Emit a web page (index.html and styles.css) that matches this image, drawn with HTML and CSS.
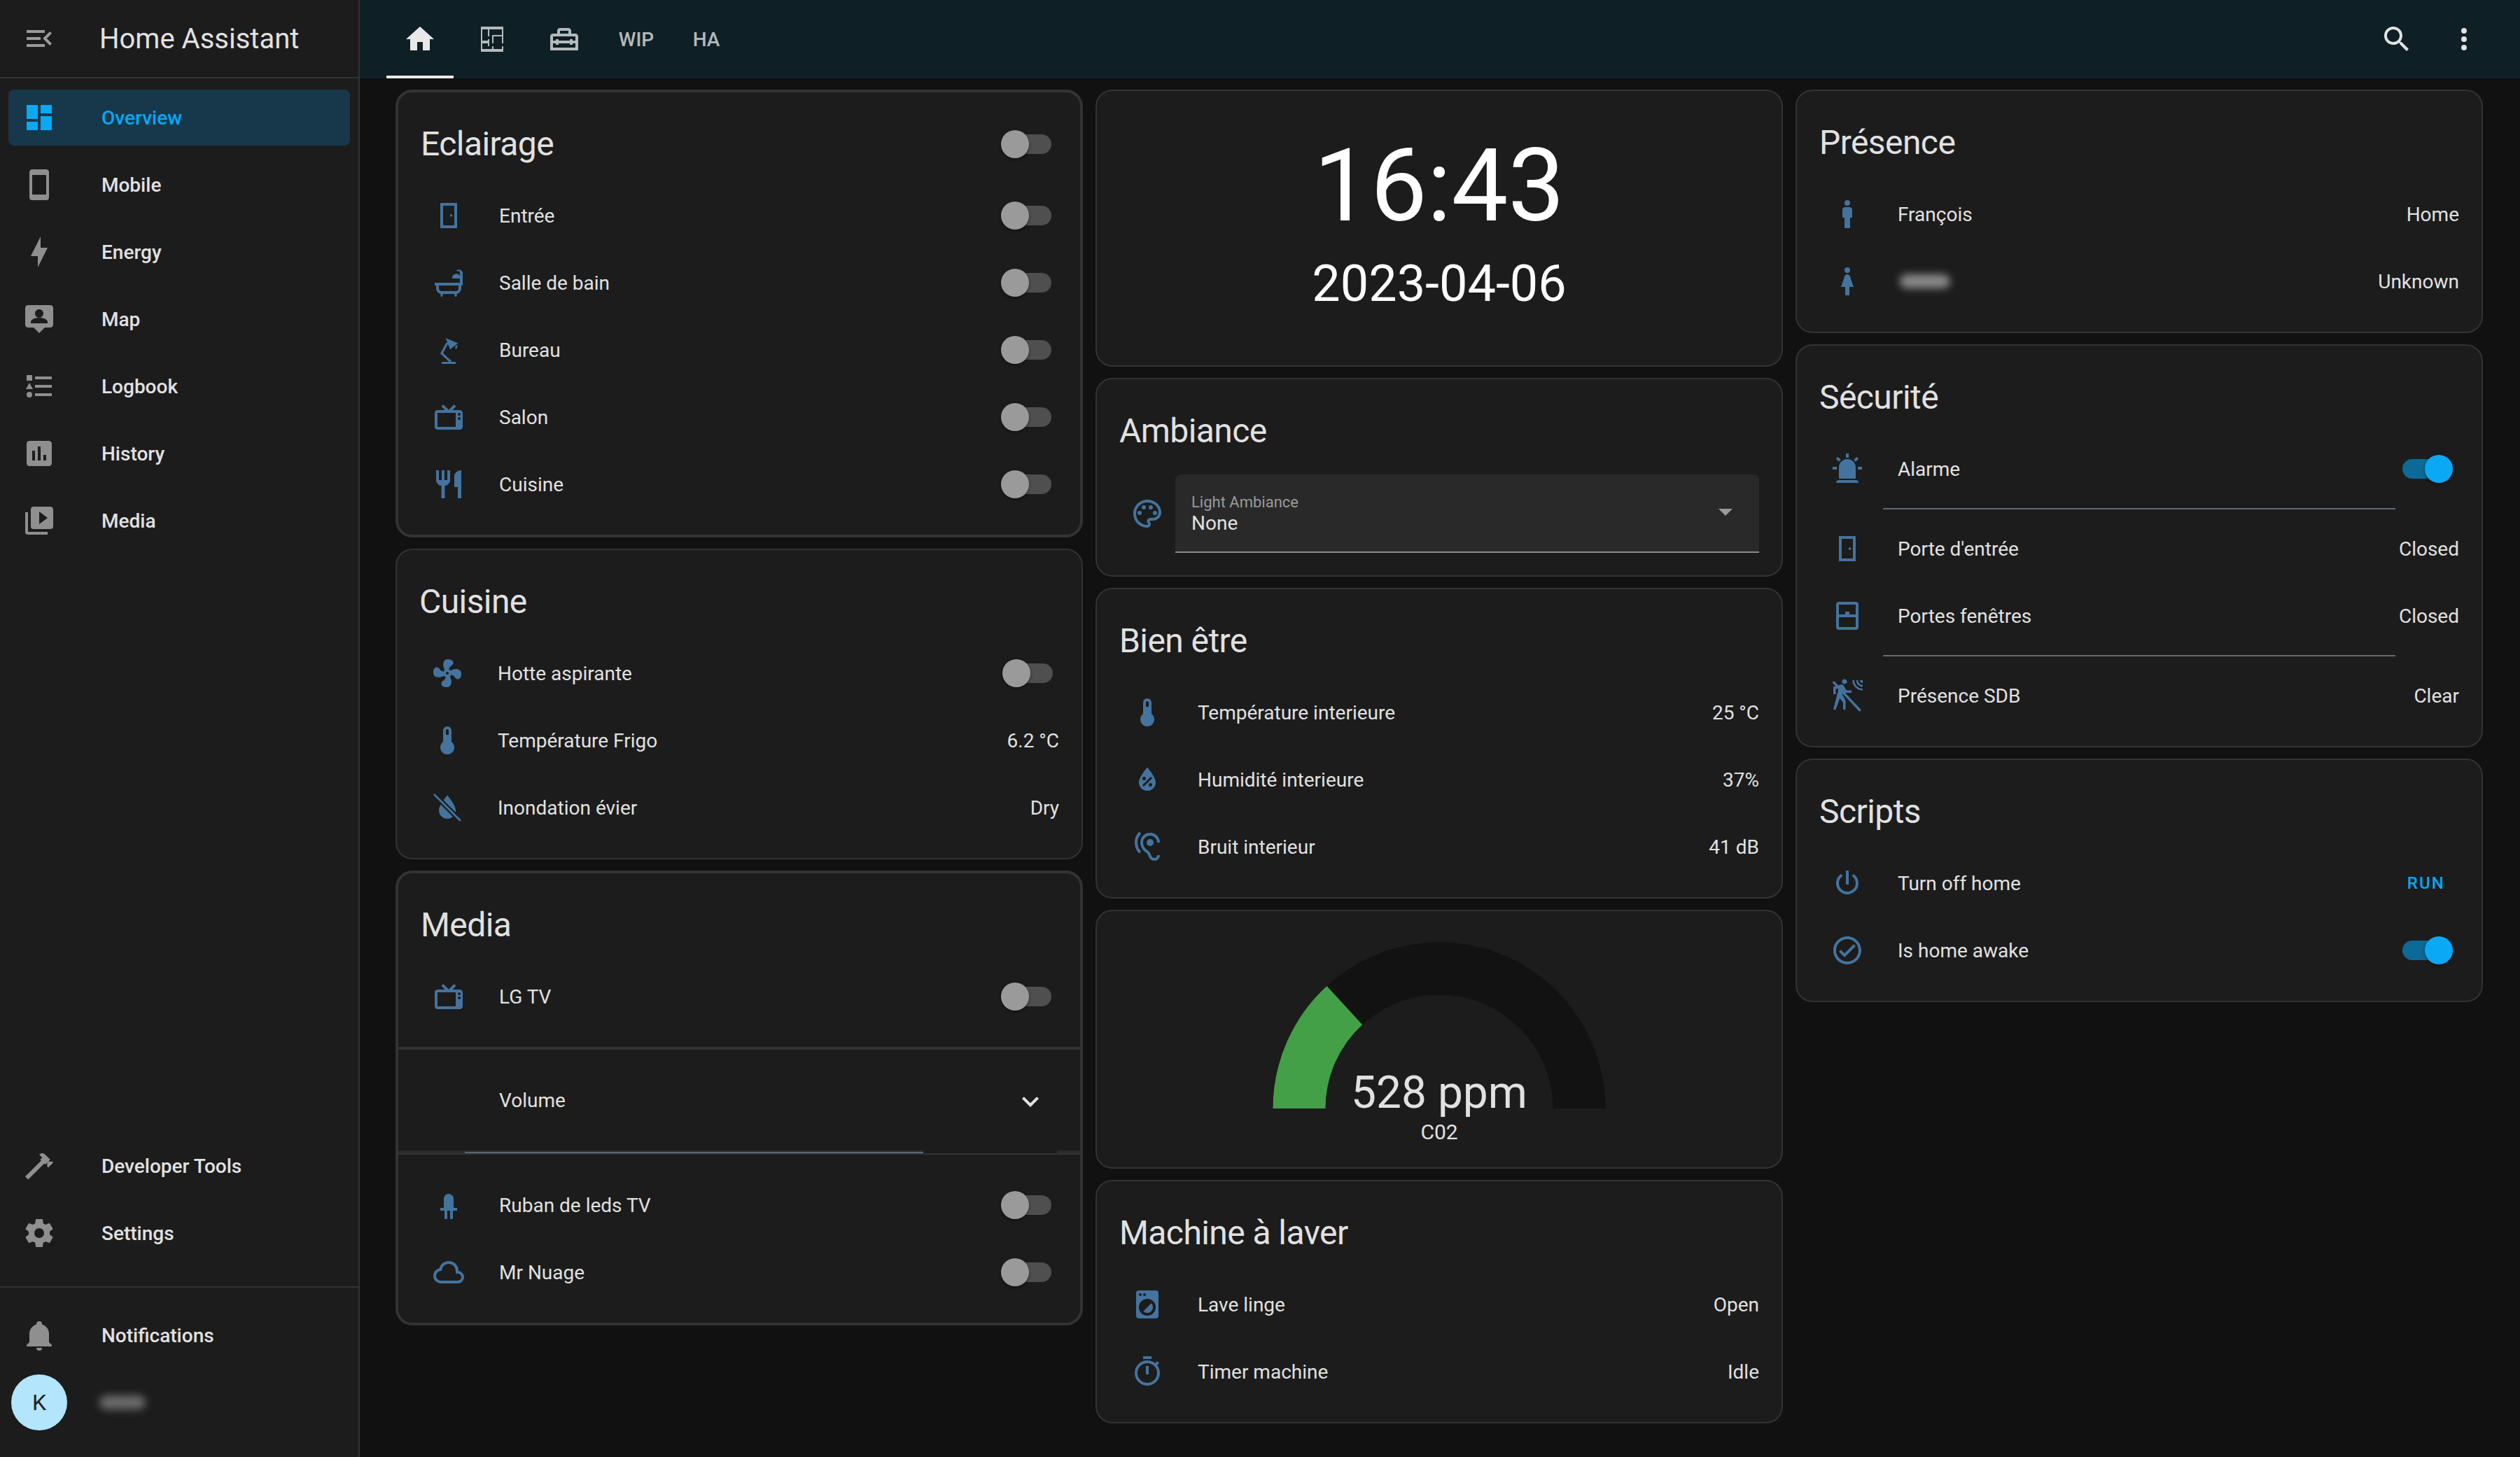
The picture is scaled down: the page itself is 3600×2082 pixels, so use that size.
FILE: index.html
```html
<!DOCTYPE html>
<html>

<head>
  <title>Home Assistant</title>
  <link rel="stylesheet" href="styles.css">
</head>

<body>
  <aside class="sidebar">
    <div class="sidebar-head">
      <svg class="mdi head-icon" viewBox="0 0 24 24"><path d="M21,15.61L19.59,17L14.58,12L19.59,7L21,8.39L17.44,12L21,15.61M3,6H16V8H3V6M3,13V11H13V13H3M3,18V16H16V18H3Z"/></svg>
      <span class="app-title">Home Assistant</span>
    </div>

    <nav class="nav">
      <a class="nav-item selected"><svg class="mdi" viewBox="0 0 24 24"><path d="M13,3V9H21V3M13,21H21V11H13M3,21H11V15H3M3,13H11V3H3V13Z"/></svg><span>Overview</span></a>
      <a class="nav-item"><svg class="mdi" viewBox="0 0 24 24"><path d="M17,19H7V5H17M17,1H7C5.89,1 5,1.89 5,3V21A2,2 0 0,0 7,23H17A2,2 0 0,0 19,21V3C19,1.89 18.1,1 17,1Z"/></svg><span>Mobile</span></a>
      <a class="nav-item"><svg class="mdi" viewBox="0 0 24 24"><path d="M11 15H6L13 1V9H18L11 23V15Z"/></svg><span>Energy</span></a>
      <a class="nav-item"><svg class="mdi" viewBox="0 0 24 24"><path d="M20,2H4C2.9,2 2,2.9 2,4V16C2,17.1 2.9,18 4,18H8L12,22L16,18H20C21.1,18 22,17.1 22,16V4C22,2.9 21.1,2 20,2M12,5C13.66,5 15,6.34 15,8S13.66,11 12,11 9,9.66 9,8 10.34,5 12,5M18,15H6V14C6,12 10,10.9 12,10.9S18,12 18,14V15Z"/></svg><span>Map</span></a>
      <a class="nav-item"><svg class="mdi" viewBox="0 0 24 24"><path d="M5,9.5L7.5,14H2.5L5,9.5M3,4H7V8H3V4M5,20A2,2 0 0,0 7,18A2,2 0 0,0 5,16A2,2 0 0,0 3,18A2,2 0 0,0 5,20M9,5V7H21V5H9M9,19H21V17H9V19M9,13H21V11H9V13Z"/></svg><span>Logbook</span></a>
      <a class="nav-item"><svg class="mdi" viewBox="0 0 24 24"><path d="M19 3H5C3.9 3 3 3.9 3 5V19C3 20.1 3.9 21 5 21H19C20.1 21 21 20.1 21 19V5C21 3.9 20.1 3 19 3M9 17H7V10H9V17M13 17H11V7H13V17M17 17H15V13H17V17Z"/></svg><span>History</span></a>
      <a class="nav-item"><svg class="mdi" viewBox="0 0 24 24"><path d="M4,6H2V20A2,2 0 0,0 4,22H18V20H4V6M20,2H8A2,2 0 0,0 6,4V16A2,2 0 0,0 8,18H20A2,2 0 0,0 22,16V4C22,2.89 21.1,2 20,2M12,14.5V5.5L18,10L12,14.5Z"/></svg><span>Media</span></a>
    </nav>

    <nav class="nav nav-bottom">
      <a class="nav-item"><svg class="mdi" viewBox="0 0 24 24"><path d="M2 19.63L13.43 8.2L12.72 7.5L14.14 6.07L12 3.89C13.2 2.7 15.09 2.7 16.27 3.89L19.87 7.5L18.45 8.91H21.29L22 9.62L18.45 13.21L17.74 12.5V9.62L16.27 11.04L15.56 10.33L4.13 21.76L2 19.63Z"/></svg><span>Developer Tools</span></a>
      <a class="nav-item"><svg class="mdi" viewBox="0 0 24 24"><path d="M12,15.5A3.5,3.5 0 0,1 8.5,12A3.5,3.5 0 0,1 12,8.5A3.5,3.5 0 0,1 15.5,12A3.5,3.5 0 0,1 12,15.5M19.43,12.97C19.47,12.65 19.5,12.33 19.5,12C19.5,11.67 19.47,11.34 19.43,11L21.54,9.37C21.73,9.22 21.78,8.95 21.66,8.73L19.66,5.27C19.54,5.05 19.27,4.96 19.05,5.05L16.56,6.05C16.04,5.66 15.5,5.32 14.87,5.07L14.5,2.42C14.46,2.18 14.25,2 14,2H10C9.75,2 9.54,2.18 9.5,2.42L9.13,5.07C8.5,5.32 7.96,5.66 7.44,6.05L4.95,5.05C4.73,4.96 4.46,5.05 4.34,5.27L2.34,8.73C2.21,8.95 2.27,9.22 2.46,9.37L4.57,11C4.53,11.34 4.5,11.67 4.5,12C4.5,12.33 4.53,12.65 4.57,12.97L2.46,14.63C2.27,14.78 2.21,15.05 2.34,15.27L4.34,18.73C4.46,18.95 4.73,19.03 4.95,18.95L7.44,17.94C7.96,18.34 8.5,18.68 9.13,18.93L9.5,21.58C9.54,21.82 9.75,22 10,22H14C14.25,22 14.46,21.82 14.5,21.58L14.87,18.93C15.5,18.67 16.04,18.34 16.56,17.94L19.05,18.95C19.27,19.03 19.54,18.95 19.66,18.73L21.66,15.27C21.78,15.05 21.73,14.78 21.54,14.63L19.43,12.97Z"/></svg><span>Settings</span></a>
      <div class="sidebar-sep"></div>
      <a class="nav-item"><svg class="mdi" viewBox="0 0 24 24"><path d="M21,19V20H3V19L5,17V11C5,7.9 7.03,5.17 10,4.29C10,4.19 10,4.1 10,4A2,2 0 0,1 12,2A2,2 0 0,1 14,4C14,4.1 14,4.19 14,4.29C16.97,5.17 19,7.9 19,11V17L21,19M14,21A2,2 0 0,1 12,23A2,2 0 0,1 10,21"/></svg><span>Notifications</span></a>
      <div class="user-row">
        <div class="avatar">K</div>
        <div class="redacted redacted-user"></div>
      </div>
    </nav>
  </aside>

  <div class="main">
    <header class="topbar">
      <div class="tabs">
        <div class="tab active"><svg class="mdi" viewBox="0 0 24 24"><path d="M10,20V14H14V20H19V12H22L12,3L2,12H5V20H10Z"/></svg></div>
        <div class="tab"><svg class="mdi" viewBox="0 0 24 24"><path d="M10,5V10H9V5H5V13H9V12H10V17H9V15H5V19H12V17H13V19H19V17H20V21H4V3H20V15H19V10H13V15H12V9H19V5H10Z"/></svg></div>
        <div class="tab"><svg class="mdi" viewBox="0 0 24 24"><path d="M20 8H17V6C17 4.9 16.1 4 15 4H9C7.9 4 7 4.9 7 6V8H4C2.9 8 2 8.9 2 10V20H22V10C22 8.9 21.1 8 20 8M9 6H15V8H9V6M20 18H4V15H6V16H8V15H16V16H18V15H20V18M18 13V12H16V13H8V12H6V13H4V10H20V13H18Z"/></svg></div>
        <div class="tab">WIP</div>
        <div class="tab tab-short">HA</div>
      </div>
      <div class="top-actions">
        <svg class="mdi" viewBox="0 0 24 24"><path d="M9.5,3A6.5,6.5 0 0,1 16,9.5C16,11.11 15.41,12.59 14.44,13.73L14.71,14H15.5L20.5,19L19,20.5L14,15.5V14.71L13.73,14.44C12.59,15.41 11.11,16 9.5,16A6.5,6.5 0 0,1 3,9.5A6.5,6.5 0 0,1 9.5,3M9.5,5C7,5 5,7 5,9.5C5,12 7,14 9.5,14C12,14 14,12 14,9.5C14,7 12,5 9.5,5Z"/></svg>
        <svg class="mdi" viewBox="0 0 24 24"><path d="M12,16A2,2 0 0,1 14,18A2,2 0 0,1 12,20A2,2 0 0,1 10,18A2,2 0 0,1 12,16M12,10A2,2 0 0,1 14,12A2,2 0 0,1 12,14A2,2 0 0,1 10,12A2,2 0 0,1 12,10M12,4A2,2 0 0,1 14,6A2,2 0 0,1 12,8A2,2 0 0,1 10,6A2,2 0 0,1 12,4Z"/></svg>
      </div>
    </header>

    <main class="columns">
      <div class="column">
        <section class="card card-nested">
          <div class="card-title">Eclairage<div class="toggle"><i class="track"></i><i class="thumb"></i></div></div>
          <div class="rows">
            <div class="row"><div class="badge"><svg class="mdi" viewBox="0 0 24 24"><path d="M6,3H18V21H6V3M8,5V19H16V5H8M13,11.3V12.7H14.6V11.3H13Z"/></svg></div><span class="name">Entrée</span><div class="toggle"><i class="track"></i><i class="thumb"></i></div></div>
            <div class="row"><div class="badge"><svg class="mdi" viewBox="0 0 24 24"><path d="M2,12H22V14H21V16A4,4 0 0,1 17,20H7A4,4 0 0,1 3,16V14H2ZM5,14V16A2,2 0 0,0 7,18H17A2,2 0 0,0 19,16V14ZM6,20H8L7.5,22H6.4ZM16,20H18L17.6,22H16.5ZM20,12V4.5A1,1 0 0 0 18.2,4L17.5,3.2A3,3 0 0 1 22,4.5V12ZM14.5,9A3,3 0 0 1 20,7V9Z"/></svg></div><span class="name">Salle de bain</span><div class="toggle"><i class="track"></i><i class="thumb"></i></div></div>
            <div class="row"><div class="badge"><svg class="mdi" viewBox="0 0 24 24"><path d="M7,20.5H17V22H7ZM9.8,3.5L18.7,7.2L13,11.6ZM17,9L18.4,8.6L17.8,11L16.6,11.2Z"/><path class="mdi-line" d="M13.5,20.5L7,14.5L11,7"/></svg></div><span class="name">Bureau</span><div class="toggle"><i class="track"></i><i class="thumb"></i></div></div>
            <div class="row"><div class="badge"><svg class="mdi" viewBox="0 0 24 24"><path d="M8.16,3L6.75,4.41L9.34,7H4C2.89,7 2,7.89 2,9V19C2,20.11 2.89,21 4,21H20C21.11,21 22,20.11 22,19V9C22,7.89 21.11,7 20,7H14.66L17.25,4.41L15.84,3L12,6.84L8.16,3M4,9H17V19H4V9M19.5,9A1,1 0 0,1 20.5,10A1,1 0 0,1 19.5,11A1,1 0 0,1 18.5,10A1,1 0 0,1 19.5,9M19.5,12A1,1 0 0,1 20.5,13A1,1 0 0,1 19.5,14A1,1 0 0,1 18.5,13A1,1 0 0,1 19.5,12Z"/></svg></div><span class="name">Salon</span><div class="toggle"><i class="track"></i><i class="thumb"></i></div></div>
            <div class="row"><div class="badge"><svg class="mdi" viewBox="0 0 24 24"><path d="M11,9H9V2H7V9H5V2H3V9C3,11.12 4.66,12.84 6.75,12.97V22H9.25V12.97C11.34,12.84 13,11.12 13,9V2H11V9M16,6V14H18.5V22H21V2C18.24,2 16,4.24 16,6Z"/></svg></div><span class="name">Cuisine</span><div class="toggle"><i class="track"></i><i class="thumb"></i></div></div>
          </div>
        </section>

        <section class="card">
          <div class="card-title">Cuisine</div>
          <div class="rows">
            <div class="row"><div class="badge"><svg class="mdi" viewBox="0 0 24 24"><path d="M12,11A1,1 0 0,0 11,12A1,1 0 0,0 12,13A1,1 0 0,0 13,12A1,1 0 0,0 12,11M12.5,2C17,2 17.11,5.57 14.75,6.75C13.76,7.24 13.32,8.29 13.13,9.22C13.61,9.42 14.03,9.73 14.35,10.13C18.05,8.13 22.03,8.92 22.03,12.5C22.03,17 18.46,17.1 17.28,14.73C16.78,13.74 15.72,13.3 14.79,13.11C14.59,13.59 14.28,14 13.88,14.34C15.87,18.03 15.08,22 11.5,22C7,22 6.91,18.42 9.27,17.24C10.25,16.75 10.69,15.71 10.89,14.79C10.4,14.59 9.97,14.27 9.65,13.87C5.96,15.85 2,15.07 2,11.5C2,7 5.56,6.89 6.74,9.26C7.24,10.25 8.29,10.68 9.22,10.87C9.41,10.39 9.73,9.97 10.14,9.65C8.15,5.96 8.94,2 12.5,2Z"/></svg></div><span class="name">Hotte aspirante</span><div class="toggle"><i class="track"></i><i class="thumb"></i></div></div>
            <div class="row"><div class="badge"><svg class="mdi" viewBox="0 0 24 24"><path d="M15 13V5A3 3 0 0 0 9 5V13A5 5 0 1 0 15 13M12 4A1 1 0 0 1 13 5V8H11V5A1 1 0 0 1 12 4Z"/></svg></div><span class="name">Température Frigo</span><span class="value">6.2 °C</span></div>
            <div class="row"><div class="badge"><svg class="mdi" viewBox="0 0 24 24"><path d="M7.32,9.87C6.55,11.32 6,12.79 6,14A6,6 0 0,0 12,20C13.5,20 14.9,19.43 15.96,18.5ZM18,14C18,10 12,3.25 12,3.25C12,3.25 10.67,4.74 9.3,6.7L17.97,15.38C18,14.93 18,14.47 18,14ZM3,2L2,3L21,22L22,21Z"/></svg></div><span class="name">Inondation évier</span><span class="value">Dry</span></div>
          </div>
        </section>

        <section class="card card-nested">
          <div class="card-title">Media</div>
          <div class="rows">
            <div class="row"><div class="badge"><svg class="mdi" viewBox="0 0 24 24"><path d="M8.16,3L6.75,4.41L9.34,7H4C2.89,7 2,7.89 2,9V19C2,20.11 2.89,21 4,21H20C21.11,21 22,20.11 22,19V9C22,7.89 21.11,7 20,7H14.66L17.25,4.41L15.84,3L12,6.84L8.16,3M4,9H17V19H4V9M19.5,9A1,1 0 0,1 20.5,10A1,1 0 0,1 19.5,11A1,1 0 0,1 18.5,10A1,1 0 0,1 19.5,9M19.5,12A1,1 0 0,1 20.5,13A1,1 0 0,1 19.5,14A1,1 0 0,1 18.5,13A1,1 0 0,1 19.5,12Z"/></svg></div><span class="name">LG TV</span><div class="toggle"><i class="track"></i><i class="thumb"></i></div></div>
          </div>
          <div class="volume">
            <div class="volume-row"><span class="name">Volume</span><svg class="mdi chevron" viewBox="0 0 24 24"><path d="M7.41,8.58L12,13.17L16.59,8.58L18,10L12,16L6,10L7.41,8.58Z"/></svg></div>
            <div class="slider"><i class="slider-start"></i><i class="slider-fill"></i><i class="slider-end"></i></div>
          </div>
          <div class="rows">
            <div class="row"><div class="badge"><svg class="mdi" viewBox="0 0 24 24"><path d="M8.5,14V7.5A3.5,3.5 0 0,1 15.5,7.5V14H18V16H15V22H13V16H11V22H9V16H6V14Z"/></svg></div><span class="name">Ruban de leds TV</span><div class="toggle"><i class="track"></i><i class="thumb"></i></div></div>
            <div class="row"><div class="badge"><svg class="mdi" viewBox="0 0 24 24"><path d="M6.5 20Q4.22 20 2.61 18.43 1 16.85 1 14.58 1 12.63 2.17 11.1 3.35 9.57 5.25 9.15 5.88 6.85 7.75 5.43 9.63 4 12 4 14.93 4 16.96 6.04 19 8.07 19 11 20.73 11.2 21.86 12.5 23 13.78 23 15.5 23 17.38 21.69 18.69 20.38 20 18.5 20H6.5M6.5 18H18.5Q19.55 18 20.27 17.27 21 16.55 21 15.5 21 14.45 20.27 13.73 19.55 13 18.5 13H17V11Q17 8.93 15.54 7.46 14.08 6 12 6 9.93 6 8.46 7.46 7 8.93 7 11H6.5Q5.05 11 4.03 12.03 3 13.05 3 14.5 3 15.95 4.03 17 5.05 18 6.5 18Z"/></svg></div><span class="name">Mr Nuage</span><div class="toggle"><i class="track"></i><i class="thumb"></i></div></div>
          </div>
        </section>
      </div>

      <div class="column">
        <section class="card clock">
          <div class="clock-time">16:43</div>
          <div class="clock-date">2023-04-06</div>
        </section>

        <section class="card">
          <div class="card-title">Ambiance</div>
          <div class="row row-select">
            <div class="badge"><svg class="mdi" viewBox="0 0 24 24"><path d="M12 22C6.49 22 2 17.51 2 12S6.49 2 12 2S22 6.04 22 11C22 14.31 19.31 17 16 17H14.23C13.95 17 13.73 17.22 13.73 17.5C13.73 17.62 13.78 17.73 13.86 17.83C14.27 18.3 14.5 18.89 14.5 19.5C14.5 20.88 13.38 22 12 22M12 4C7.59 4 4 7.59 4 12S7.59 20 12 20C12.28 20 12.5 19.78 12.5 19.5C12.5 19.34 12.42 19.22 12.36 19.15C11.95 18.69 11.73 18.1 11.73 17.5C11.73 16.12 12.85 15 14.23 15H16C18.21 15 20 13.21 20 11C20 7.14 16.41 4 12 4M6.5 10A1.5 1.5 0 1 1 6.5 13A1.5 1.5 0 1 1 6.5 10M9.5 6A1.5 1.5 0 1 1 9.5 9A1.5 1.5 0 1 1 9.5 6M14.5 6A1.5 1.5 0 1 1 14.5 9A1.5 1.5 0 1 1 14.5 6M17.5 10A1.5 1.5 0 1 1 17.5 13A1.5 1.5 0 1 1 17.5 10Z"/></svg></div>
            <div class="select">
              <div>
                <div class="select-label">Light Ambiance</div>
                <div class="select-value">None</div>
              </div>
              <i class="select-arrow"></i>
            </div>
          </div>
        </section>

        <section class="card">
          <div class="card-title">Bien être</div>
          <div class="rows">
            <div class="row"><div class="badge"><svg class="mdi" viewBox="0 0 24 24"><path d="M15 13V5A3 3 0 0 0 9 5V13A5 5 0 1 0 15 13M12 4A1 1 0 0 1 13 5V8H11V5A1 1 0 0 1 12 4Z"/></svg></div><span class="name">Température interieure</span><span class="value">25 °C</span></div>
            <div class="row"><div class="badge"><svg class="mdi" viewBox="0 0 24 24"><path d="M12,3.25C12,3.25 6,10 6,14C6,17.32 8.69,20 12,20A6,6 0 0,0 18,14C18,10 12,3.25 12,3.25M14.47,9.97L15.53,11.03L9.53,17.03L8.47,15.97M9.75,10A1.25,1.25 0 0,1 11,11.25A1.25,1.25 0 0,1 9.75,12.5A1.25,1.25 0 0,1 8.5,11.25A1.25,1.25 0 0,1 9.75,10M14.25,14.5A1.25,1.25 0 0,1 15.5,15.75A1.25,1.25 0 0,1 14.25,17A1.25,1.25 0 0,1 13,15.75A1.25,1.25 0 0,1 14.25,14.5Z"/></svg></div><span class="name">Humidité interieure</span><span class="value">37%</span></div>
            <div class="row"><div class="badge"><svg class="mdi" viewBox="0 0 24 24"><path d="M17,20C16.71,20 16.44,19.94 16.24,19.85C15.53,19.48 15.03,18.97 14.53,17.47C14,15.91 13.06,15.2 12.14,14.5C11.35,13.89 10.54,13.26 9.84,12C9.32,11.06 9,10 9,9C9,6.2 11.2,4 14,4C16.8,4 19,6.2 19,9H21C21,5.07 17.93,2 14,2C10.07,2 7,5.07 7,9C7,10.26 7.38,11.65 8.07,12.9C8.98,14.55 10.05,15.38 10.92,16.05C11.73,16.67 12.31,17.12 12.63,18.1C13.23,19.92 14,20.94 15.36,21.65C15.87,21.88 16.43,22 17,22A4,4 0 0,0 21,18H19A2,2 0 0,1 17,20M7.64,2.64L6.22,1.22C4.23,3.21 3,5.96 3,9C3,12.04 4.23,14.79 6.22,16.78L7.63,15.37C6,13.74 5,11.5 5,9C5,6.5 6,4.26 7.64,2.64M11.5,9A2.5,2.5 0 0,0 14,11.5A2.5,2.5 0 0,0 16.5,9A2.5,2.5 0 0,0 14,6.5A2.5,2.5 0 0,0 11.5,9Z"/></svg></div><span class="name">Bruit interieur</span><span class="value">41 dB</span></div>
          </div>
        </section>

        <section class="card gauge">
          <svg class="gauge-arc" width="476" height="238" viewBox="0 0 476 238">
            <path class="gauge-bg" d="M0.5 238A237.5 237.5 0 0 1 475.5 238H400.5A162.5 162.5 0 0 0 75.5 238Z"/>
            <path class="gauge-value" d="M0.5 238A237.5 237.5 0 0 1 77.5 62.9L128.2 118.2A162.5 162.5 0 0 0 75.5 238Z"/>
          </svg>
          <div class="gauge-text">528 ppm</div>
          <div class="gauge-name">C02</div>
        </section>

        <section class="card">
          <div class="card-title">Machine à laver</div>
          <div class="rows">
            <div class="row"><div class="badge"><svg class="mdi" viewBox="0 0 24 24"><path d="M14.83,11.17C16.39,12.73 16.39,15.27 14.83,16.83C13.27,18.39 10.73,18.39 9.17,16.83L14.83,11.17M6,2H18A2,2 0 0,1 20,4V20A2,2 0 0,1 18,22H6A2,2 0 0,1 4,20V4A2,2 0 0,1 6,2M7,4A1,1 0 0,0 6,5A1,1 0 0,0 7,6A1,1 0 0,0 8,5A1,1 0 0,0 7,4M10,4A1,1 0 0,0 9,5A1,1 0 0,0 10,6A1,1 0 0,0 11,5A1,1 0 0,0 10,4M12,8A6,6 0 0,0 6,14A6,6 0 0,0 12,20A6,6 0 0,0 18,14A6,6 0 0,0 12,8Z"/></svg></div><span class="name">Lave linge</span><span class="value">Open</span></div>
            <div class="row"><div class="badge"><svg class="mdi" viewBox="0 0 24 24"><path d="M12,20A7,7 0 0,1 5,13A7,7 0 0,1 12,6A7,7 0 0,1 19,13A7,7 0 0,1 12,20M19.03,7.39L20.45,5.97C20,5.46 19.55,5 19.04,4.56L17.62,6C16.07,4.74 14.12,4 12,4A9,9 0 0,0 3,13A9,9 0 0,0 12,22C17,22 21,17.97 21,13C21,10.88 20.26,8.93 19.03,7.39M11,14H13V8H11M15,1H9V3H15V1Z"/></svg></div><span class="name">Timer machine</span><span class="value">Idle</span></div>
          </div>
        </section>
      </div>

      <div class="column">
        <section class="card">
          <div class="card-title">Présence</div>
          <div class="rows">
            <div class="row"><div class="badge"><svg class="mdi" viewBox="0 0 24 24"><path d="M12,2A2,2 0 0,1 14,4A2,2 0 0,1 12,6A2,2 0 0,1 10,4A2,2 0 0,1 12,2M10.5,7H13.5A2,2 0 0,1 15.5,9V14.5H14V22H10V14.5H8.5V9A2,2 0 0,1 10.5,7Z"/></svg></div><span class="name">François</span><span class="value">Home</span></div>
            <div class="row"><div class="badge"><svg class="mdi" viewBox="0 0 24 24"><path d="M12,2A2,2 0 0,1 14,4A2,2 0 0,1 12,6A2,2 0 0,1 10,4A2,2 0 0,1 12,2M10.5,22V16H7.5L10.09,8.41C10.34,7.59 11.1,7 12,7C12.9,7 13.66,7.59 13.91,8.41L16.5,16H13.5V22H10.5Z"/></svg></div><div class="redacted redacted-name"></div><span class="value">Unknown</span></div>
          </div>
        </section>

        <section class="card">
          <div class="card-title">Sécurité</div>
          <div class="rows">
            <div class="row"><div class="badge"><svg class="mdi" viewBox="0 0 24 24"><path d="M6,6.9L3.87,4.78L5.28,3.37L7.4,5.5L6,6.9M13,1V4H11V1H13M20.13,4.78L18,6.9L16.6,5.5L18.72,3.37L20.13,4.78M4.5,10.5V12.5H1.5V10.5H4.5M19.5,10.5H22.5V12.5H19.5V10.5M6,20H18A2,2 0 0,1 20,22H4A2,2 0 0,1 6,20M12,5A6,6 0 0,1 18,11V19H6V11A6,6 0 0,1 12,5Z"/></svg></div><span class="name">Alarme</span><div class="toggle on"><i class="track"></i><i class="thumb"></i></div></div>
            <div class="divider"></div>
            <div class="row"><div class="badge"><svg class="mdi" viewBox="0 0 24 24"><path d="M6,3H18V21H6V3M8,5V19H16V5H8M13,11.3V12.7H14.6V11.3H13Z"/></svg></div><span class="name">Porte d'entrée</span><span class="value">Closed</span></div>
            <div class="row"><div class="badge"><svg class="mdi" viewBox="0 0 24 24"><path d="M6,2H18A2,2 0 0,1 20,4V20A2,2 0 0,1 18,22H6A2,2 0 0,1 4,20V4A2,2 0 0,1 6,2M6,4V11H10.5V9H13.5V11H18V4H6M6,13V20H18V13H6Z"/></svg></div><span class="name">Portes fenêtres</span><span class="value">Closed</span></div>
            <div class="divider"></div>
            <div class="row"><div class="badge"><svg class="mdi" viewBox="0 0 24 24"><path d="M10,0.2C9,0.2 8.2,1 8.2,2C8.2,3 9,3.8 10,3.8C11,3.8 11.8,3 11.8,2C11.8,1 11,0.2 10,0.2M15.67,1A7.33,7.33 0 0,0 23,8.33V7A6,6 0 0,1 17,1H15.67M18.33,1C18.33,3.58 20.42,5.67 23,5.67V4.33C21.16,4.33 19.67,2.84 19.67,1H18.33M21,1A2,2 0 0,0 23,3V1H21M7.92,4.03C7.75,4.03 7.58,4.06 7.42,4.11L2,5.8V11H3.8V7.33L5.91,6.67L2,22H3.8L6.67,13.89L9,17V22H10.8V15.59L8.31,11.05L9.04,8.18L10.12,10H15V8.2H11.38L9.38,4.87C9.08,4.37 8.54,4.03 7.92,4.03Z"/><path d="M2.5,1.5L1.3,2.7L20.7,23.5L22,22.3Z"/></svg></div><span class="name">Présence SDB</span><span class="value">Clear</span></div>
          </div>
        </section>

        <section class="card">
          <div class="card-title">Scripts</div>
          <div class="rows">
            <div class="row"><div class="badge"><svg class="mdi" viewBox="0 0 24 24"><path d="M16.56,5.44L15.11,6.89C16.84,7.94 18,9.83 18,12A6,6 0 0,1 12,18A6,6 0 0,1 6,12C6,9.83 7.16,7.94 8.88,6.88L7.44,5.44C5.36,6.88 4,9.28 4,12A8,8 0 0,0 12,20A8,8 0 0,0 20,12C20,9.28 18.64,6.88 16.56,5.44M13,3H11V13H13"/></svg></div><span class="name">Turn off home</span><span class="run">RUN</span></div>
            <div class="row"><div class="badge"><svg class="mdi" viewBox="0 0 24 24"><path d="M12 2C6.5 2 2 6.5 2 12S6.5 22 12 22 22 17.5 22 12 17.5 2 12 2M12 20C7.59 20 4 16.41 4 12S7.59 4 12 4 20 7.59 20 12 16.41 20 12 20M16.59 7.58L10 14.17L7.41 11.59L6 13L10 17L18 9L16.59 7.58Z"/></svg></div><span class="name">Is home awake</span><div class="toggle on"><i class="track"></i><i class="thumb"></i></div></div>
          </div>
        </section>
      </div>
    </main>
  </div>
</body>

</html>
```

FILE: styles.css
```css
/* Global styles */
body {
  display: flex;
  height: 2082px;
  margin: 0;
  overflow: hidden;
  background-color: #111111;
  color: #e1e1e1;
  font-family: 'Roboto', sans-serif;
  font-size: 28px;
}

.mdi {
  display: block;
  flex: none;
  width: 48px;
  height: 48px;
  fill: currentColor;
  fill-rule: evenodd;
}

.mdi-line {
  fill: none;
  stroke: currentColor;
  stroke-width: 1.6;
}

.redacted {
  height: 20px;
  border-radius: 10px;
  filter: blur(6px);
}

/* Sidebar */
.sidebar {
  display: flex;
  flex: none;
  flex-direction: column;
  box-sizing: border-box;
  width: 514px;
  height: 100%;
  background-color: #1c1c1c;
  border-right: 2px solid #333333;
}

.sidebar-head {
  display: flex;
  flex: none;
  align-items: center;
  box-sizing: border-box;
  height: 112px;
  padding-left: 32px;
  border-bottom: 2px solid #333333;
}

.head-icon {
  color: #9a9a9a;
}

.app-title {
  margin-left: 62px;
  font-size: 40px;
}

.nav {
  display: flex;
  flex-direction: column;
  gap: 16px;
  padding-top: 16px;
}

.nav-bottom {
  margin-top: auto;
  padding-top: 0;
  padding-bottom: 38px;
}

.nav-item {
  display: flex;
  align-items: center;
  gap: 65px;
  box-sizing: border-box;
  width: 488px;
  height: 80px;
  margin-left: 12px;
  padding-left: 20px;
  border-radius: 8px;
  color: #e1e1e1;
  font-weight: 500;
}

.nav-item .mdi {
  color: #8f8f8f;
}

.nav-item.selected {
  background-color: #17384b;
  color: #03a9f4;
}

.nav-item.selected .mdi {
  color: #0aa9f5;
}

.sidebar-sep {
  height: 2px;
  margin: 20px 0 12px;
  background-color: #333333;
}

.user-row {
  display: flex;
  align-items: center;
  gap: 46px;
  padding-left: 16px;
}

.avatar {
  display: flex;
  align-items: center;
  justify-content: center;
  width: 80px;
  height: 80px;
  border-radius: 50%;
  background-color: #b3e5fc;
  color: #222222;
  font-size: 32px;
}

.redacted-user {
  width: 66px;
  background-color: #6a6a6a;
}

/* Top bar */
.main {
  display: flex;
  flex: 1;
  flex-direction: column;
  min-width: 0;
}

.topbar {
  display: flex;
  flex: none;
  align-items: center;
  justify-content: space-between;
  height: 112px;
  padding: 0 56px 0 38px;
  background-color: #0e1f26;
}

.tabs {
  display: flex;
  gap: 7px;
  height: 100%;
}

.tab {
  display: flex;
  align-items: center;
  justify-content: center;
  box-sizing: border-box;
  width: 96px;
  height: 100%;
  border-bottom: 4px solid transparent;
  padding-top: 4px;
  color: #b4b9bb;
  font-weight: 500;
}

.tab-short {
  width: 90px;
}

.tab.active {
  border-bottom-color: #e8e8e8;
  color: #e8e8e8;
}

.top-actions {
  display: flex;
  gap: 48px;
  color: #e1e1e1;
}

/* Cards */
.columns {
  display: flex;
  gap: 18px;
  padding: 16px 0 0 51px;
}

.column {
  display: flex;
  flex-direction: column;
  gap: 16px;
  width: 982px;
}

.card {
  padding: 0 32px 32px;
  background-color: #1c1c1c;
  border: 2px solid #333333;
  border-radius: 24px;
}

.card-nested {
  border-width: 4px;
}

.card-title {
  display: flex;
  align-items: center;
  justify-content: space-between;
  box-sizing: border-box;
  height: 136px;
  padding: 34px 0 22px;
  font-size: 48px;
  letter-spacing: -0.012em;
  line-height: 80px;
}

/* Entity rows */
.rows {
  display: flex;
  flex-direction: column;
  gap: 16px;
}

.row {
  display: flex;
  align-items: center;
  height: 80px;
}

.badge {
  display: flex;
  flex: none;
  align-items: center;
  justify-content: center;
  width: 80px;
  color: #44739e;
}

.name {
  margin-left: 32px;
}

.value {
  margin-left: auto;
}

.run {
  margin-left: auto;
  margin-right: 20px;
  color: #03a9f4;
  font-size: 24px;
  font-weight: 500;
  letter-spacing: 0.0892857em;
}

.divider {
  height: 2px;
  margin: 0 91px;
  background-color: #5f6b75;
}

.redacted-name {
  width: 72px;
  margin-left: 35px;
  background-color: #8a8a8a;
}

/* Toggle */
.toggle {
  position: relative;
  flex: none;
  width: 72px;
  height: 40px;
  margin-left: auto;
  margin-right: 9px;
}

.track {
  position: absolute;
  top: 6px;
  right: 0;
  width: 64px;
  height: 28px;
  border-radius: 14px;
  background-color: #4f4f4f;
}

.thumb {
  position: absolute;
  top: 0;
  left: 0;
  width: 40px;
  height: 40px;
  border-radius: 50%;
  background-color: #9a9a9a;
  box-shadow: 0 2px 4px rgba(0, 0, 0, 0.4);
}

.toggle.on .track {
  right: 8px;
  background-color: #0b6a96;
}

.toggle.on .thumb {
  left: auto;
  right: 0;
  background-color: #0aa9f5;
}

/* Volume slider */
.volume {
  margin: 32px -32px;
  border-top: 4px solid #333333;
}

.volume-row {
  display: flex;
  align-items: center;
  justify-content: space-between;
  height: 144px;
  padding: 0 47px 0 144px;
}

.volume-row .name {
  margin-left: 0;
}

.chevron {
  margin-top: 4px;
}

.slider {
  display: flex;
  height: 4px;
  border-bottom: 2px solid #333333;
}

.slider-start {
  width: 95px;
  background-color: #2b2b2b;
}

.slider-fill {
  box-sizing: border-box;
  width: 655px;
  border-top: 2px solid #2b2b2b;
  background-color: #5a6a75;
}

.slider-end {
  width: 33px;
  margin-left: auto;
  background-color: #2b2b2b;
}

/* Clock */
.clock {
  box-sizing: border-box;
  height: 396px;
  padding-top: 64px;
  color: #ffffff;
  text-align: center;
}

.clock-time {
  font-size: 144px;
  line-height: 144px;
}

.clock-date {
  margin-top: 32px;
  font-size: 72px;
  line-height: 72px;
}

/* Select */
.row-select {
  height: 112px;
}

.select {
  display: flex;
  flex: 1;
  align-items: center;
  justify-content: space-between;
  box-sizing: border-box;
  height: 112px;
  padding: 2px 38px 0 23px;
  background-color: #292929;
  border-bottom: 2px solid #8a8a8a;
  border-radius: 8px 8px 0 0;
}

.select-label {
  color: #9a9a9a;
  font-size: 22px;
  line-height: 28px;
}

.select-value {
  line-height: 32px;
}

.select-arrow {
  width: 0;
  height: 0;
  margin-top: -4px;
  border-top: 10px solid #9a9a9a;
  border-left: 10px solid transparent;
  border-right: 10px solid transparent;
}

/* Gauge */
.gauge {
  padding-top: 44px;
  padding-bottom: 34px;
  text-align: center;
}

.gauge-arc {
  display: block;
  margin: 0 auto;
}

.gauge-bg {
  fill: #121212;
}

.gauge-value {
  fill: #43a047;
}

.gauge-text {
  margin-top: -54px;
  font-size: 64px;
  line-height: 64px;
}

.gauge-name {
  margin-top: 8px;
  font-size: 30px;
  line-height: 32px;
}
```
